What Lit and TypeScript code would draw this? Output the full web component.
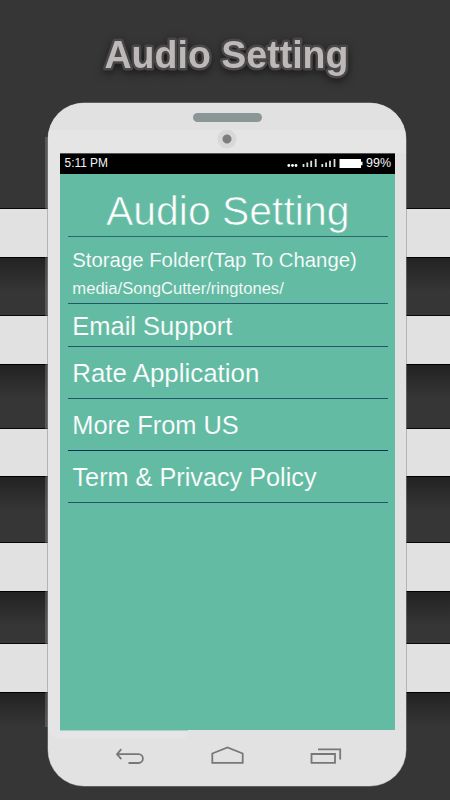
import { LitElement, html, css, svg } from "lit";
import { customElement } from "lit/decorators.js";

interface Line {
  text: string;
  x: number;
  baseline: number;
  width: number;
  size: number;
}

interface Row {
  height: number;
  rule: string;
  lines: Line[];
}

const rows: Row[] = [
  { height: 63, rule: "soft", lines: [{ text: "Audio Setting", x: 38, baseline: 50.5, width: 243.5, size: 40.5 }] },
  {
    height: 67,
    rule: "mid",
    lines: [
      { text: "Storage Folder(Tap To Change)", x: 4.3, baseline: 30, width: 284.5, size: 20.6 },
      { text: "media/SongCutter/ringtones/", x: 4.3, baseline: 57, width: 211.5, size: 16 },
    ],
  },
  { height: 43, rule: "mid", lines: [{ text: "Email Support", x: 4.3, baseline: 31, width: 160, size: 25.5 }] },
  { height: 52, rule: "mid", lines: [{ text: "Rate Application", x: 4.3, baseline: 35, width: 187, size: 25.5 }] },
  { height: 52, rule: "deep", lines: [{ text: "More From US", x: 4.3, baseline: 35, width: 166.5, size: 25.5 }] },
  { height: 52, rule: "mid", lines: [{ text: "Term & Privacy Policy", x: 4.5, baseline: 35, width: 244, size: 25.5 }] },
];

@customElement("app-root")
export class AppRoot extends LitElement {
  static styles = css`
    :host {
      display: block;
      position: relative;
      width: 450px;
      height: 800px;
      overflow: hidden;
      background: #363636;
      font-family: "Liberation Sans", Arial, sans-serif;
    }
    * { box-sizing: border-box; }
    svg { display: block; }
    .stripes {
      position: absolute;
      inset: 0;
      display: grid;
      grid-template-rows: 209px 48px 59px 48px 65px 47px 67px 48px 53px 48px 108px;
    }
    .gap {
      background: linear-gradient(#222 0, #282828 10px, #363636 34px);
      border-top: 1px solid #000;
      border-bottom: 1px solid #070707;
    }
    .gap.first { background: #363636; border-top: 0; }
    .gap.last { border-bottom: 0; }
    .band { background: #e1e1e1; }
    .page { position: relative; display: flex; flex-direction: column; }
    .title {
      height: 103px;
      margin: 0;
      overflow: visible;
    }
    .title text {
      font: bold 38.6px "Liberation Sans", Arial, sans-serif;
      fill: #bdb9b9;
      stroke: #494748;
      stroke-width: 5px;
      stroke-linejoin: round;
      paint-order: stroke;
      filter: drop-shadow(0 3px 4px rgba(0, 0, 0, 0.5));
    }
    .phone {
      width: 358px;
      height: 683px;
      margin-left: 48px;
      border-radius: 36px;
      background: #e2e2e2;
      display: flex;
      flex-direction: column;
      box-shadow: 0 0 0 0.5px #888;
    }
    .top {
      height: 50px;
      padding-top: 10px;
      display: flex;
      flex-direction: column;
      align-items: center;
      border-radius: 36px 36px 0 0;
      background: linear-gradient(#e1e1e1 27px, #e5e5e5 27px);
    }
    .speaker { width: 69px; height: 9px; border-radius: 5px; background: #8b9796; }
    .camera {
      width: 20px;
      height: 20px;
      margin-top: 7px;
      border-radius: 50%;
      background: radial-gradient(circle, #7d7d7d 4px, #d8d8d8 5px, #d8d8d8 9px, #e5e5e5 10px);
    }
    .glass { display: flex; background: linear-gradient(90deg, #e5e5e5 12px, #e1e1e1 346px); padding-left: 12px; }
    .screen { width: 334.5px; height: 577px; background: #63bba3; }
    .status {
      height: 21px;
      background: #000;
      border-top: 1px solid #555;
    }
    .list { padding: 0 7px 0 8px; }
    .row { border-bottom: 1px solid #22566b; }
    .row.soft { border-color: #2c6770; }
    .row.deep { border-color: #06305d; }
    .row text { fill: #fff; }
    /* A thin outline in the background colour lightens the regular weight. */
    .row text {
      stroke: #63bba3;
      stroke-width: 0.15px;
    }
    .row.soft text { stroke-width: 0.7px; }
    .status text { font-size: 12px; fill: #f4f4f4; }
    .nav { height: 56px; overflow: visible; }
    .shade {
      position: absolute;
      left: 45px;
      top: 137px;
      width: 3px;
      height: 590px;
      background: rgba(225, 225, 225, 0.2);
    }
  `;

  private row(r: Row) {
    return html`<div class="row ${r.rule}">
      <svg width="319" height=${r.height - 1}>
        ${r.lines.map(
          (l) => svg`<text x=${l.x} y=${l.baseline} font-size=${l.size} textLength=${l.width} lengthAdjust="spacingAndGlyphs">${l.text}</text>`
        )}
      </svg>
    </div>`;
  }

  render() {
    return html`
      <div class="stripes">
        <div class="gap first"></div><div class="band"></div>
        <div class="gap"></div><div class="band"></div>
        <div class="gap"></div><div class="band"></div>
        <div class="gap"></div><div class="band"></div>
        <div class="gap"></div><div class="band"></div>
        <div class="gap last"></div>
      </div>
      <div class="shade"></div>
      <div class="page">
        <svg class="title" width="450" height="103">
          <text x="104.5" y="68.2" textLength="244" lengthAdjust="spacingAndGlyphs">Audio Setting</text>
        </svg>
        <div class="phone">
          <div class="top"><div class="speaker"></div><div class="camera"></div></div>
          <div class="glass">
            <div class="screen">
              <div class="status">
                <svg width="334" height="20">
                  <text x="4.5" y="13.2" textLength="43.5" lengthAdjust="spacingAndGlyphs">5:11 PM</text>
                  <g fill="#fff">
                    <circle cx="228.8" cy="11.5" r="1.4" /><circle cx="232.5" cy="11.5" r="1.4" /><circle cx="236" cy="11.5" r="1.4" />
                    <path d="M279.5 5h21.5v2.7h1.5v3.6h-1.5v2.7h-21.5z" />
                  </g>
                  <path d="M243.5 13v-3M247.3 13v-4.4M251.2 13V6.8M255.7 13V5M262.3 13v-3M266.1 13v-4.4M270 13V6.8M274.5 13V5" stroke="#ddd" stroke-width="1.8" />
                  <text x="306" y="13.2" textLength="25" lengthAdjust="spacingAndGlyphs">99%</text>
                </svg>
              </div>
              <div class="list">${rows.map((r) => this.row(r))}</div>
            </div>
          </div>
          <svg class="nav" width="358" height="56" fill="none" stroke="#777" stroke-width="1.8">
            <path d="M0 0H142L138 8H8Q2 6 0 0z" fill="#e5e5e5" stroke="none" />
            <path d="M12 0H140V1H12z" fill="#a9d2c6" stroke="none" />
            <path d="M69 24.2H90.5a4.3 4.3 0 0 1 0 8.8H80.5M73.3 19.2L69 24.2L73.3 29.2" />
            <path d="M164.3 32.8V23.5L179.5 17.5L194.7 23.5V32.8z" />
            <path d="M263.5 24H287V32.8H263.5zM270 19.3H292.2V29.5" />
          </svg>
        </div>
      </div>
    `;
  }
}
